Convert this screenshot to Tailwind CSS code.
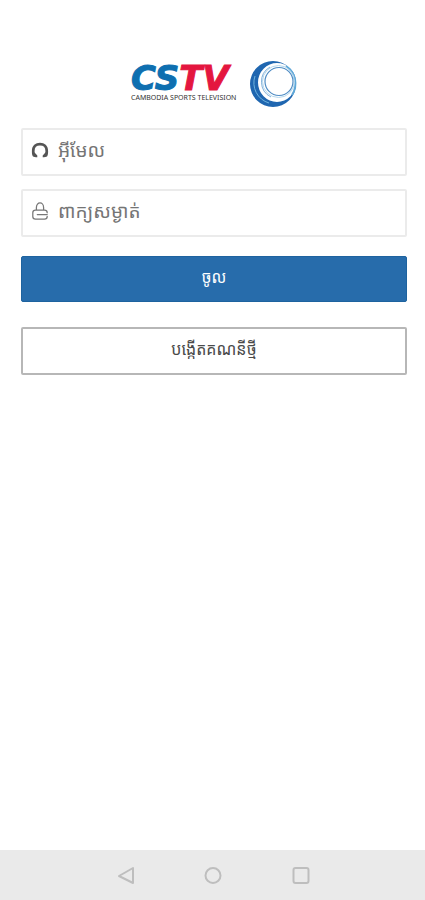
<!DOCTYPE html>
<html lang="km">
<head>
<meta charset="utf-8">
<meta name="viewport" content="width=device-width, initial-scale=1">
<title>CSTV</title>
<script src="https://cdn.jsdelivr.net/npm/@tailwindcss/browser@4"></script>
</head>
<body class="flex min-h-screen flex-col bg-white font-['Noto_Sans','Noto_Sans_Khmer','Khmer_OS',sans-serif] text-[#4a4a4a]">
<main class="flex flex-1 flex-col pr-[18px] pl-[21px] pt-[60px]">
  <h1 class="flex justify-center">
    <svg class="h-12 w-[166px] overflow-visible" viewBox="0 0 166 48" role="img" aria-label="CSTV Cambodia Sports Television">
      <text x="0" y="30" font-family="DejaVu Sans" font-weight="bold" font-style="italic" font-size="34" stroke-width="1" fill="#0e6fb0" stroke="#0e6fb0">CS<tspan fill="#e4163f" stroke="#e4163f">TV</tspan></text>
      <text x="0" y="40" font-family="Noto Sans" font-size="7" fill="#333" stroke="none">CAMBODIA SPORTS TELEVISION</text>
      <path fill="#1f66b0" fill-rule="evenodd" d="M142 1a23 23 0 1 0 0 46a23 23 0 1 0 0-46ZM146 3a19 19.500 0 1 1 0 39a19 19.500 0 1 1 0-39Z"/>
      <g fill="none">
        <path stroke="#5fa8d8" stroke-width="2" d="M155 6a21 21 0 0 1 6 29"/>
        <path stroke="#6fb4de" stroke-width="1" d="M124 16a21 21 0 0 0 14 27"/>
        <circle cx="147.500" cy="21.500" r="16" stroke="#b5d8ee"/>
        <circle cx="148" cy="21.500" r="14" stroke="#4f8cc4" stroke-width="1.200"/>
        <path stroke="#7fb0da" stroke-width="1" d="M139 7a17 17 0 0 0 1 30"/>
      </g>
    </svg>
  </h1>
  <form class="mt-5 flex flex-col">
    <label class="flex h-12 items-center rounded-[2px] border-2 border-[#ebebeb] px-2">
      <svg class="mb-1 size-[18px] shrink-0" viewBox="0 0 20 20" aria-hidden="true">
        <path fill="#555" d="M2 17C1 15 1 13 1 11C1 5 5 2 10 2s9 3 9 9c0 2 0 4-1 6c-1 1-3 1-5 1v-2l2-2c1-1 1-2 1-3c0-4-2-6-6-6s-6 2-6 6c0 1 0 2 1 3l2 2v2c-2 0-4 0-5-1Z"/>
      </svg>
      <input type="email" aria-label="អ៊ីមែល" placeholder="អ៊ីមែល" class="mb-1 h-9 min-w-0 flex-1 pl-[9px] text-[19px] outline-none placeholder:text-[#757575]">
    </label>
    <label class="mt-[13px] flex h-12 items-center rounded-[2px] border-2 border-[#ebebeb] px-2">
      <svg class="mb-1 size-[18px] shrink-0" viewBox="0 0 20 20" fill="none" stroke="#777" stroke-width="1.400" stroke-linecap="round" stroke-linejoin="round" aria-hidden="true">
        <path d="M6 9V6c0-3 2-5 4-5s4 2 4 5v3M18 12c0-2-1-3-3-3H5c-2 0-3 1-3 3v4c0 2 1 3 3 3h10c2 0 3-1 3-3M7 14h11"/>
      </svg>
      <input type="password" aria-label="ពាក្យសម្ងាត់" placeholder="ពាក្យសម្ងាត់" class="mb-1 h-9 min-w-0 flex-1 pl-[9px] text-[19px] outline-none placeholder:text-[#757575]">
    </label>
    <button type="submit" class="mt-[19px] h-[46px] rounded-[2px] border border-[#1e639f] bg-[#276cab] pb-1 text-base text-white">ចូល</button>
    <button type="button" class="mt-[25px] h-12 rounded-[2px] border-2 border-[#b7b7b7] pb-1 text-base">បង្កើតគណនីថ្មី</button>
  </form>
</main>
<nav class="flex h-[50px] items-center justify-center gap-[66px] bg-[#eaeaea]" aria-label="Android">
  <button type="button" aria-label="Back"><svg class="size-[22px]" viewBox="0 0 22 22" fill="none" stroke="#bebebe" stroke-width="2" stroke-linejoin="round"><path d="M19 4v15L5 12Z"/></svg></button>
  <button type="button" aria-label="Home"><svg class="size-[22px]" viewBox="0 0 22 22" fill="none" stroke="#bebebe" stroke-width="2"><circle cx="11" cy="11.500" r="7.500"/></svg></button>
  <button type="button" aria-label="Recent apps"><svg class="size-[22px]" viewBox="0 0 22 22" fill="none" stroke="#bebebe" stroke-width="2"><rect x="3.500" y="4" width="15" height="15" rx="2"/></svg></button>
</nav>
</body>
</html>
